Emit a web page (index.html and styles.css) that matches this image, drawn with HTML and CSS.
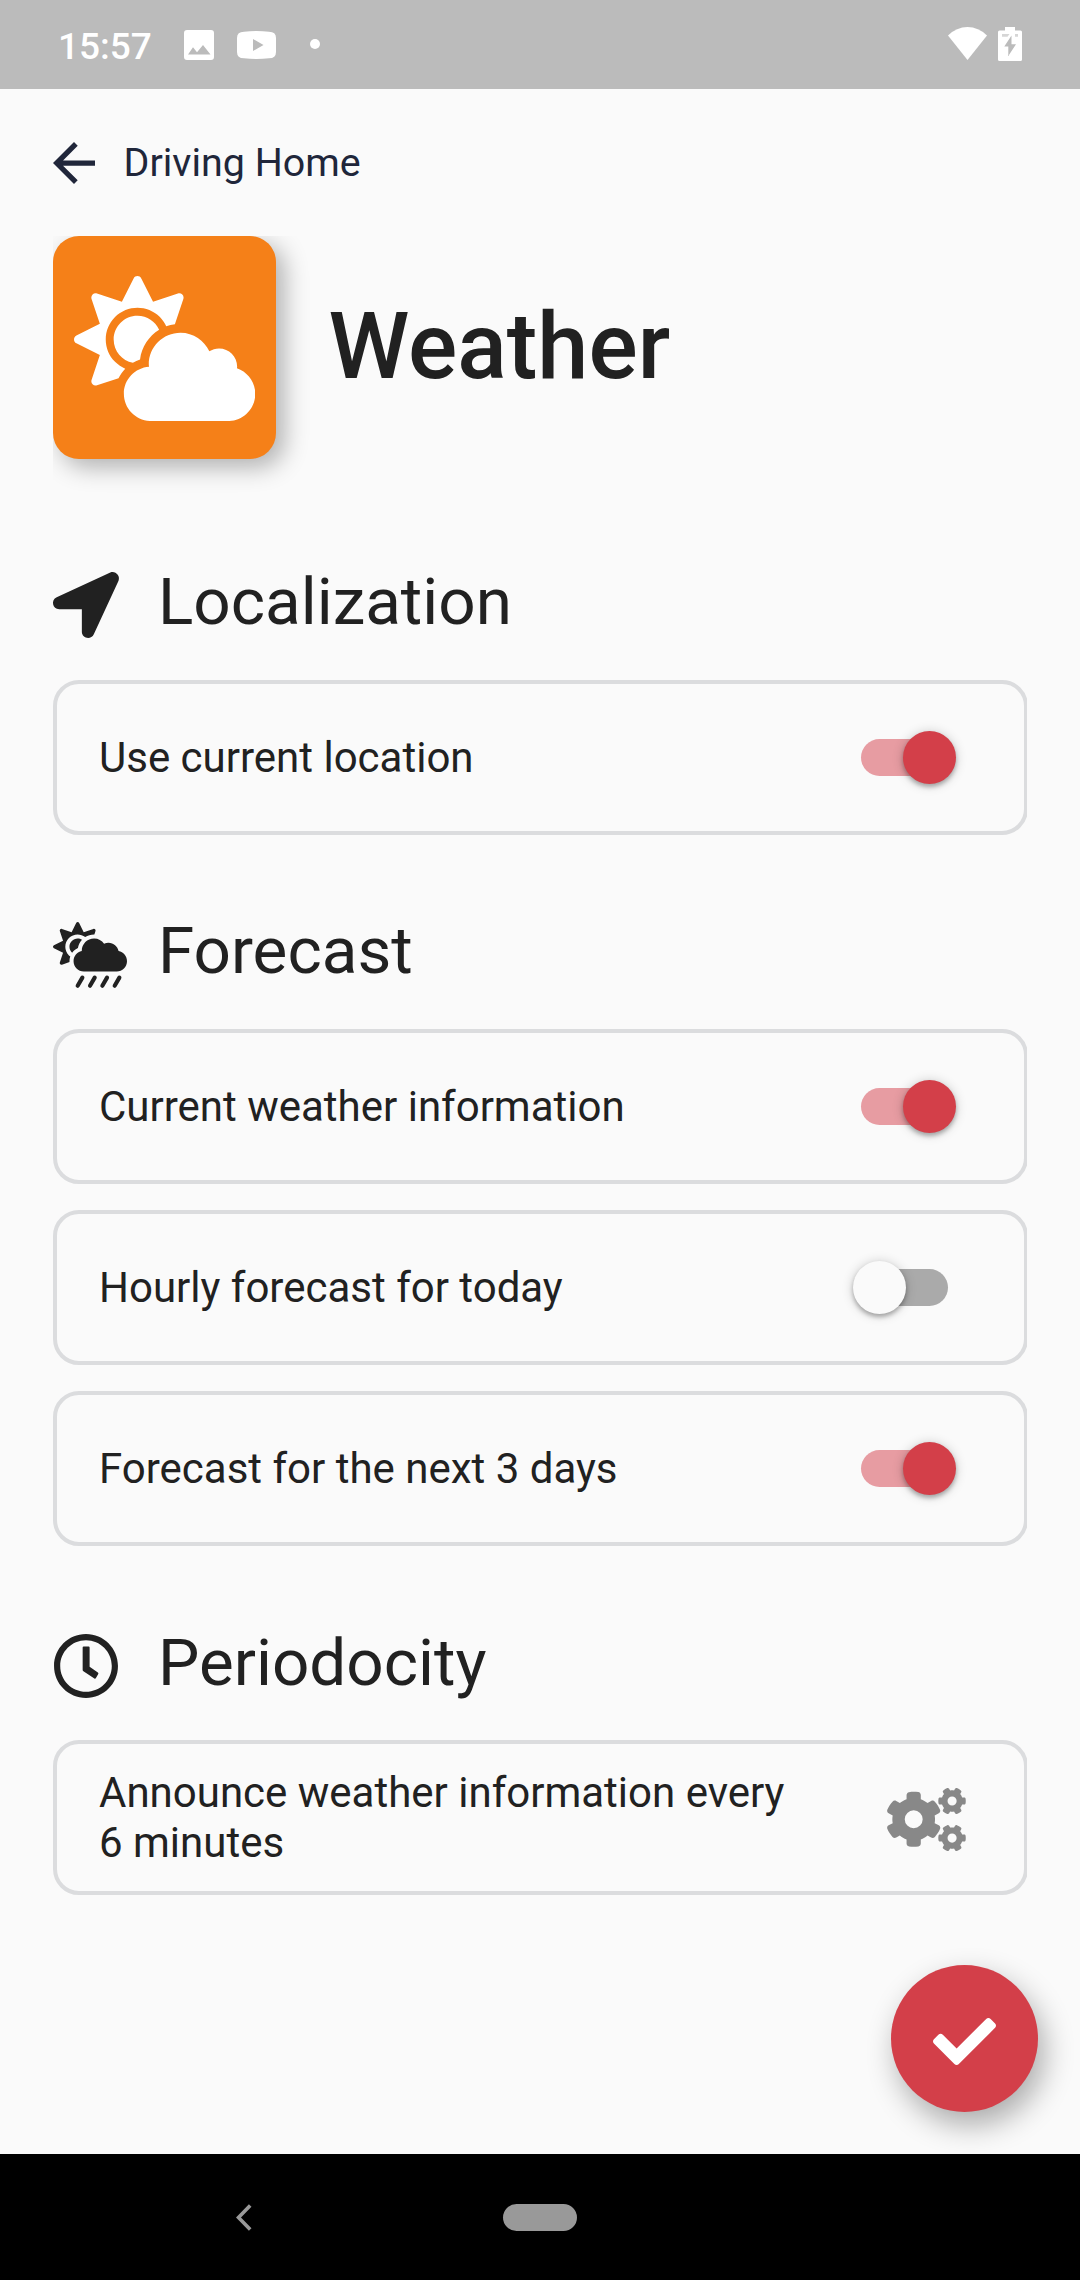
FILE: index.html
```html
<!DOCTYPE html>
<html lang="en">
<head>
<meta charset="utf-8">
<title>Weather</title>
<link rel="stylesheet" href="styles.css">
</head>
<body>
<svg class="defs" aria-hidden="true">
  <symbol id="small-cog" viewBox="0 0 640 512"><path d="M512.1 191l-8.2 14.3c-3 5.3-9.4 7.5-15.1 5.4-11.8-4.4-22.6-10.7-32.1-18.6-4.6-3.8-5.8-10.5-2.8-15.7l8.2-14.3c-6.9-8-12.3-17.3-15.9-27.4h-16.5c-6 0-11.2-4.3-12.2-10.3-2-12-2.1-24.6 0-37.1 1-6 6.2-10.4 12.2-10.4h16.5c3.6-10.1 9-19.4 15.9-27.4l-8.2-14.3c-3-5.2-1.9-11.9 2.8-15.7 9.5-7.9 20.4-14.2 32.1-18.6 5.7-2.1 12.1.1 15.1 5.4l8.2 14.3c10.5-1.9 21.2-1.9 31.7 0L552 6.3c3-5.3 9.4-7.5 15.1-5.4 11.8 4.4 22.6 10.7 32.1 18.6 4.6 3.8 5.8 10.5 2.8 15.7l-8.2 14.3c6.9 8 12.3 17.3 15.9 27.4h16.5c6 0 11.2 4.3 12.2 10.3 2 12 2.1 24.6 0 37.1-1 6-6.2 10.4-12.2 10.4h-16.5c-3.6 10.1-9 19.4-15.9 27.4l8.2 14.3c3 5.2 1.9 11.9-2.8 15.7-9.5 7.9-20.4 14.2-32.1 18.6-5.7 2.1-12.1-.1-15.1-5.4l-8.2-14.3c-10.4 1.9-21.2 1.9-31.7 0zM528 69a37 37 0 1 0 0 74a37 37 0 1 0 0-74z" fill-rule="evenodd"/></symbol>
</svg>
<div class="phone">
  <div class="status">
    <span class="time">15:57</span>
    <svg class="st-photo" viewBox="0 0 30 30"><path fill-rule="evenodd" d="M3 0h24a3 3 0 0 1 3 3v24a3 3 0 0 1-3 3H3a3 3 0 0 1-3-3V3a3 3 0 0 1 3-3zM4 24.5h22.5L19 15l-6 7.2-4-5z"/></svg>
    <svg class="st-tube" viewBox="0 0 39 28"><path fill-rule="evenodd" d="M7 .7Q19.500-.5 32 .7Q39 .7 39 7V21Q39 27.300 32 27.300Q19.500 28.500 7 27.300Q0 27.300 0 21V7Q0 .7 7 .7zM16 8v12l10.500-6z"/></svg>
    <span class="dot"></span>
    <svg class="st-wifi" viewBox="0 0 39 33"><path d="M0 8.500Q8.500 0 19.500 0T39 8.500L19.500 33z"/></svg>
    <svg class="st-batt" viewBox="0 0 24 34"><path fill-rule="evenodd" d="M7 0h10v3.500h5.500q1.500 0 1.500 1.500v27.500q0 1.500-1.500 1.500h-21Q0 34 0 32.500V5Q0 3.500 1.500 3.500H7zM13.500 8.500L6.300 19.500h4v9.500l7.700-11.800h-4.500z"/><path class="level" d="M4 7h7.500L9.500 9.800H4zM17 7h3v2.800h-3z"/></svg>
  </div>

  <main class="app">
    <header class="toolbar">
      <svg class="back" viewBox="4 4 16 16"><path d="M20 11H7.830l5.590-5.590L12 4l-8 8 8 8 1.410-1.410L7.830 13H20v-2z"/></svg>
      <span class="crumb">Driving Home</span>
    </header>

    <div class="hero">
      <div class="tile-clip"><div class="tile">
        <svg viewBox="0 0 640 512"><path d="M575.2 325.7c.2-1.9.8-3.700.8-5.600 0-35.300-28.700-64-64-64-12.600 0-24.200 3.800-34.100 10-17.600-38.800-56.500-66-101.900-66-61.800 0-112 50.100-112 112 0 3 .7 5.800.9 8.700-49.600 3.700-88.900 44.700-88.900 95.300 0 53 43 96 96 96h272c53 0 96-43 96-96 0-42.100-27.200-77.400-64.800-90.400zm-430.400-22.600c-43.700-43.700-43.700-114.700 0-158.300 43.700-43.700 114.700-43.700 158.400 0 9.700 9.700 16.900 20.900 22.300 32.700 9.800-3.700 20.100-6 30.700-7.500L386 81.100c4-11.900-7.300-23.100-19.200-19.200L279 91.200 237.500 8.400C232-2.800 216-2.800 210.400 8.400L169 91.200 81.100 61.900C69.300 58 58 69.300 61.900 81.100l29.300 87.800-82.800 41.500c-11.200 5.600-11.200 21.600 0 27.200l82.800 41.400-29.300 87.800c-4 11.900 7.300 23.100 19.200 19.200l76.100-25.300c6.100-12.400 14-23.700 23.600-33.500-13.100-5.400-25.400-13.400-36-24zm-4.800-79.200c0 40.800 29.300 74.800 67.900 82.300 8-4.700 16.300-8.800 25.200-11.700 5.400-44.300 31-82.500 67.400-105C287.300 160.400 258 140 224 140c-46.300 0-84 37.600-84 83.900z"/></svg>
      </div></div>
      <h1>Weather</h1>
    </div>

    <section>
      <h2><svg class="sq" viewBox="0 0 512 512"><path d="M444.520 3.520L28.740 195.420c-47.970 22.390-31.980 92.750 19.190 92.750h175.910v175.910c0 51.170 70.360 67.170 92.750 19.190l191.900-415.780c15.990-38.390-25.590-79.970-63.970-63.960z"/></svg><span>Localization</span></h2>
      <div class="card"><span>Use current location</span><i class="switch on"></i></div>
    </section>

    <section>
      <h2><svg class="wide" viewBox="0 0 576 512"><path d="M510.500 225.500c-6.900-37.200-39.300-65.500-78.500-65.500-12.300 0-23.900 3-34.300 8-17.400-24.100-45.600-40-77.700-40-53 0-96 43-96 96 0 .5.2 1.100.2 1.600C187.600 233 160 265.200 160 304c0 44.200 35.800 80 80 80h256c44.200 0 80-35.800 80-80 0-39.200-28.200-71.700-65.500-78.500zm-386.400 34.400c-37.400-37.400-37.400-98.300 0-135.800 34.600-34.600 89.100-36.800 126.700-7.400 20-12.900 43.600-20.700 69.200-20.700.7 0 1.300.2 2 .2l8.900-26.700c3.400-10.200-6.300-19.800-16.500-16.400l-75.300 25.100-35.500-71c-4.800-9.600-18.500-9.600-23.300 0l-35.500 71-75.300-25.100c-10.200-3.400-19.800 6.300-16.400 16.500l25.100 75.300-71 35.500c-9.600 4.800-9.600 18.500 0 23.300l71 35.500-25.100 75.300c-3.400 10.200 6.300 19.800 16.500 16.500l59.200-19.700c-.2-2.400-.7-4.700-.7-7.200 0-12.500 2.300-24.500 6.200-35.900-3.600-2.700-7.100-5.200-10.200-8.300zm69.800-58c4.300-24.500 15.800-46.400 31.900-64-9.800-6.200-21.400-9.900-33.800-9.900-35.300 0-64 28.700-64 64 0 18.700 8.200 35.400 21.100 47.100 11.300-15.900 26.600-28.900 44.800-37.200z"/><path class="rain" d="M516.600 432l-36.600 64M420.600 432l-36.600 64M324.600 432l-36.600 64M228.600 432l-36.600 64"/></svg><span>Forecast</span></h2>
      <div class="card"><span>Current weather information</span><i class="switch on"></i></div>
      <div class="card"><span>Hourly forecast for today</span><i class="switch"></i></div>
      <div class="card"><span>Forecast for the next 3 days</span><i class="switch on"></i></div>
    </section>

    <section>
      <h2><svg class="sq" viewBox="0 0 512 512"><path d="M256 8C119 8 8 119 8 256s111 248 248 248 248-111 248-248S393 8 256 8zm0 448c-110.500 0-200-89.500-200-200S145.500 56 256 56s200 89.500 200 200-89.500 200-200 200zM230 112q0-8 8-8h38q8 0 8 8v150l64 45q7 5 3 11l-19 33q-4 6-11 2l-85-56q-6-4-6-12z"/></svg><span>Periodocity</span></h2>
      <div class="card"><span>Announce weather information every<br>6 minutes</span>
        <svg class="cogs" viewBox="0 0 640 512"><use href="#small-cog" width="640" height="512"/><use href="#small-cog" y="301" width="640" height="512"/><path fill-rule="evenodd" d="M386.300 286.100l33.700 16.800c10.100 5.800 14.500 18.100 10.500 29.100-8.900 24.200-26.400 46.400-42.600 65.800-7.400 8.900-20.200 11.100-30.300 5.300l-29.100-16.800c-16 13.700-34.600 24.600-54.900 31.700v33.600c0 11.600-8.300 21.600-19.700 23.600-24.600 4.200-50.400 4.400-75.900 0-11.500-2-20-11.900-20-23.600V418c-20.300-7.200-38.900-18-54.900-31.700L74 403c-10 5.800-22.900 3.600-30.300-5.300-16.200-19.400-33.300-41.600-42.200-65.700-4-10.900.4-23.200 10.500-29.100l33.300-16.800c-3.900-20.900-3.900-42.400 0-63.400L12 205.800c-10.100-5.800-14.600-18.100-10.500-29 8.900-24.200 26-46.400 42.200-65.800 7.400-8.900 20.200-11.100 30.300-5.300l29.100 16.800c16-13.700 34.600-24.600 54.900-31.700V57.100c0-11.500 8.200-21.500 19.600-23.500 24.600-4.200 50.500-4.400 76-.1 11.500 2 20 11.900 20 23.600v33.600c20.300 7.200 38.900 18 54.900 31.700l29.100-16.800c10-5.800 22.900-3.600 30.300 5.300 16.200 19.400 33.200 41.600 42.100 65.800 4 10.900.1 23.200-10 29.100l-33.700 16.800c3.900 21 3.900 42.500 0 63.500zM216 181a73 73 0 1 0 0 146a73 73 0 1 0 0-146z"/></svg>
      </div>
    </section>

    <button class="fab" aria-label="Save"><svg viewBox="0 0 512 512"><path d="M173.898 439.404l-166.400-166.400c-9.997-9.997-9.997-26.206 0-36.204l36.203-36.204c9.997-9.998 26.207-9.998 36.204 0L192 312.690 432.095 72.596c9.997-9.997 26.207-9.997 36.204 0l36.203 36.204c9.997 9.997 9.997 26.206 0 36.204l-294.400 294.401c-9.998 9.997-26.207 9.997-36.204-.001z"/></svg></button>
  </main>

  <nav class="navbar">
    <svg viewBox="0 0 16 27"><path d="M14.200 1.500L2.500 13.500l11.700 12"/></svg>
    <span class="pill"></span>
  </nav>
</div>
</body>
</html>
```
FILE: styles.css
```css
* { box-sizing: border-box; }
body { margin: 0; font-family: Roboto, "Noto Sans", sans-serif; color: #212121; background: #fafafa; }
svg { display: block; flex: none; }
h1, h2 { margin: 0; font-weight: 400; }
.defs { display: none; }
.phone { width: 1080px; height: 2280px; display: flex; flex-direction: column; }

.status { height: 89px; background: #bbb; display: flex; align-items: flex-start; padding: 0 58px; color: #fff; fill: #fff; }
.time { width: 126px; padding-top: 25px; font-size: 37px; line-height: 43px; font-weight: 500; }
.st-photo { width: 30px; height: 30px; margin-top: 30px; }
.st-tube { width: 39px; height: 28px; margin: 31px 0 0 23px; }
.dot { width: 10px; height: 10px; border-radius: 50%; background: #fff; margin: 39px 0 0 34px; }
.st-wifi { width: 39px; height: 33px; margin: 27px 0 0 auto; }
.st-batt { width: 24px; height: 34px; margin: 27px 0 0 11px; }
.level { fill: #d6d6d6; }

.app { flex: 1; position: relative; overflow: hidden; padding: 0 53px; }
.toolbar { height: 147px; display: flex; align-items: center; gap: 28.600px; color: #20263a; fill: #20263a; }
.back { width: 42px; height: 42px; }
.crumb { font-size: 39.4px; line-height: 46px; }

.hero { height: 223px; display: flex; align-items: center; gap: 52.500px; margin-bottom: 113px; }
/* the tile's shadow only spreads right and down */
.tile-clip { clip-path: inset(0 -60px -60px 0); }
.tile { width: 223px; height: 223px; border-radius: 26px; background: #f58018; box-shadow: 8px 8px 24px rgba(0,0,0,.3); padding: 40px 0 0 20.700px; }
.tile svg { width: 181.300px; height: 145px; fill: #fff; }
h1 { font-size: 91.900px; line-height: 108px; font-weight: 500; padding-bottom: 1px; }

section { margin-bottom: 86px; }
h2 { display: grid; grid-template-columns: 105px 1fr; height: 66px; margin-bottom: 42px; font-size: 65.600px; line-height: 60px; fill: #212121; }
h2 .sq { width: 66px; height: 66px; }
h2 .wide { width: 74px; height: 66px; margin-top: .7px; }
section:last-of-type h2 { padding-top: 1px; }
h2 svg { overflow: visible; }
.rain { fill: none; stroke: #212121; stroke-width: 32; stroke-linecap: round; }

/* cards run one pixel past the column and are trimmed there */
.card { width: 975px; height: 155px; clip-path: inset(0 1px 0 0); border: 4px solid #dbdcde; border-radius: 26px; padding: 0 58px 0 42px; display: flex; align-items: center; justify-content: space-between; font-size: 42px; line-height: 50px; }
.card + .card { margin-top: 26px; }

.switch { width: 87px; height: 37px; margin-right: 18px; border-radius: 19px; background: #aaa; display: flex; align-items: center; }
.switch::before { content: ""; flex: none; width: 53px; height: 53px; border-radius: 50%; background: #fafafa; margin-left: -8px; box-shadow: 0 3px 4px rgba(0,0,0,.26), 0 1px 12px rgba(0,0,0,.2); }
.switch.on { background: #e79ca2; }
.switch.on::before { background: #d33f49; margin-left: 42px; }
.cogs { width: 79px; height: 63px; fill: #888; margin: 4px 0 0; }

.fab { position: absolute; left: 891px; top: 1876px; width: 147px; height: 147px; border: 0; border-radius: 50%; background: #d33f49; display: flex; align-items: center; justify-content: center; padding: 5px 0 0; box-shadow: 6px 13px 30px rgba(0,0,0,.32); }
.fab svg { width: 63px; height: 63px; fill: #fff; }

.navbar { height: 126px; background: #000; display: flex; align-items: center; padding: 0 0 0 235.500px; }
.navbar svg { width: 16px; height: 27px; fill: none; stroke: #999; stroke-width: 3.600; }
.pill { width: 74px; height: 27px; border-radius: 14px; background: #999; margin-left: 251.500px; }
```
